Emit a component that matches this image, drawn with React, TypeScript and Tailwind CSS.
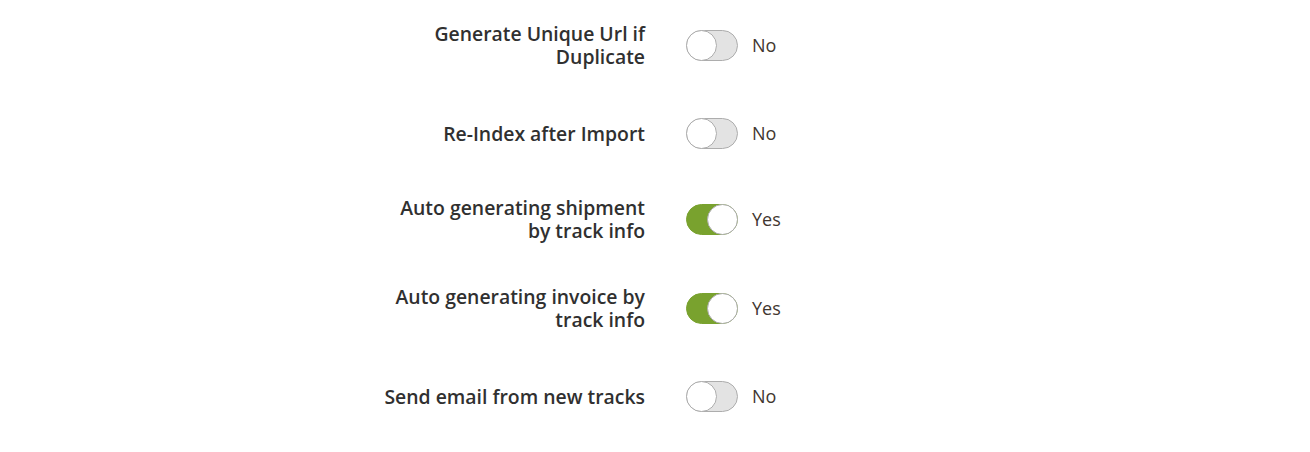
const rows = [
  { label: "Generate Unique Url if Duplicate", on: false, gap: "" },
  { label: "Re-Index after Import", on: false, gap: "" },
  { label: "Auto generating shipment by track info", on: true, gap: "-mt-[2px]" },
  { label: "Auto generating invoice by track info", on: true, gap: "mt-px" },
  { label: "Send email from new tracks", on: false, gap: "" },
];

function Switch({ on }: { on: boolean }) {
  return (
    <div className="flex items-center">
      <div
        className={
          on
            ? "relative h-[31px] w-[52px] rounded-full border border-[#79a22e] bg-[#79a22e]"
            : "relative h-[31px] w-[52px] rounded-full border border-[#adadad] bg-[#e3e3e3]"
        }
      >
        <div
          className={
            on
              ? "absolute -top-px -right-px h-[31px] w-[31px] rounded-full border border-[#adadad] bg-white"
              : "absolute -top-px -left-px h-[31px] w-[31px] rounded-full border border-[#adadad] bg-white"
          }
        />
      </div>
      <span className="ml-[14px] text-[18px] text-[#41362f]">{on ? "Yes" : "No"}</span>
    </div>
  );
}

export default function App() {
  return (
    <div
      className="min-h-[452px] w-[1310px] bg-white pt-px"
      style={{ fontFamily: '"Open Sans", "Liberation Sans", sans-serif' }}
    >
      {rows.map((r) => (
        <div key={r.label} className={`flex h-[88px] items-center ${r.gap}`}>
          <div className="ml-[377px] w-[268px] text-right text-[19.4px] font-semibold leading-[23px] text-[#303030]">
            {r.label}
          </div>
          <div className="ml-[41px]">
            <Switch on={r.on} />
          </div>
        </div>
      ))}
    </div>
  );
}
